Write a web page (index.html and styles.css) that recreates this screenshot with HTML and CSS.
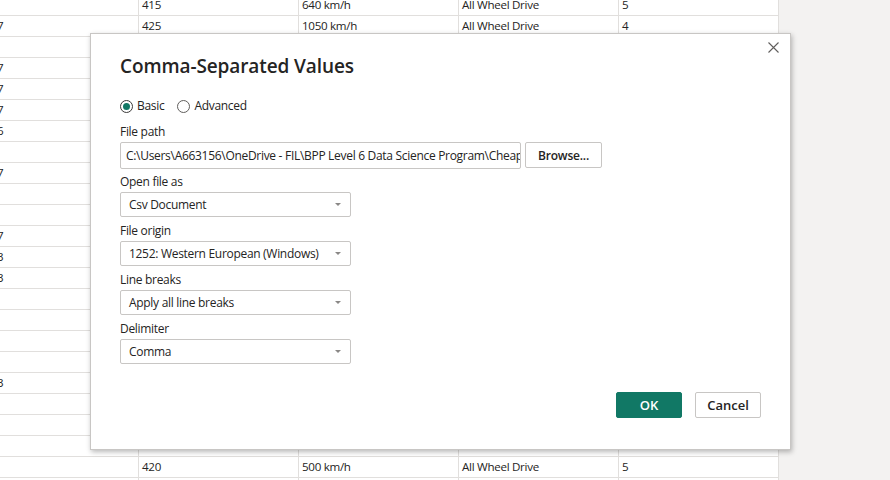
FILE: index.html
```html
<!DOCTYPE html>
<html lang="en">
<head>
<meta charset="utf-8">
<title>Comma-Separated Values</title>
<link rel="stylesheet" href="styles.css">
</head>
<body>
<div class="page">
  <div class="grid">
    <div class="row"><div class="c c1"></div><div class="c">415</div><div class="c">640 km/h</div><div class="c">All Wheel Drive</div><div class="c">5</div></div>
    <div class="row"><div class="c c1">7</div><div class="c">425</div><div class="c">1050 km/h</div><div class="c">All Wheel Drive</div><div class="c">4</div></div>
    <div class="row"><div class="c c1"></div><div class="c">405</div><div class="c">550 km/h</div><div class="c">All Wheel Drive</div><div class="c">5</div></div>
    <div class="row"><div class="c c1">7</div><div class="c">380</div><div class="c">520 km/h</div><div class="c">All Wheel Drive</div><div class="c">5</div></div>
    <div class="row"><div class="c c1">7</div><div class="c">410</div><div class="c">560 km/h</div><div class="c">All Wheel Drive</div><div class="c">5</div></div>
    <div class="row"><div class="c c1">7</div><div class="c">420</div><div class="c">610 km/h</div><div class="c">All Wheel Drive</div><div class="c">5</div></div>
    <div class="row"><div class="c c1">6</div><div class="c">395</div><div class="c">470 km/h</div><div class="c">All Wheel Drive</div><div class="c">5</div></div>
    <div class="row"><div class="c c1"></div><div class="c">440</div><div class="c">580 km/h</div><div class="c">All Wheel Drive</div><div class="c">5</div></div>
    <div class="row"><div class="c c1">7</div><div class="c">415</div><div class="c">600 km/h</div><div class="c">All Wheel Drive</div><div class="c">5</div></div>
    <div class="row"><div class="c c1"></div><div class="c">430</div><div class="c">540 km/h</div><div class="c">All Wheel Drive</div><div class="c">5</div></div>
    <div class="row"><div class="c c1"></div><div class="c">400</div><div class="c">490 km/h</div><div class="c">All Wheel Drive</div><div class="c">5</div></div>
    <div class="row"><div class="c c1">7</div><div class="c">450</div><div class="c">620 km/h</div><div class="c">All Wheel Drive</div><div class="c">5</div></div>
    <div class="row"><div class="c c1">3</div><div class="c">410</div><div class="c">530 km/h</div><div class="c">All Wheel Drive</div><div class="c">5</div></div>
    <div class="row"><div class="c c1">3</div><div class="c">420</div><div class="c">570 km/h</div><div class="c">All Wheel Drive</div><div class="c">5</div></div>
    <div class="row"><div class="c c1"></div><div class="c">405</div><div class="c">500 km/h</div><div class="c">All Wheel Drive</div><div class="c">5</div></div>
    <div class="row"><div class="c c1"></div><div class="c">390</div><div class="c">480 km/h</div><div class="c">All Wheel Drive</div><div class="c">5</div></div>
    <div class="row"><div class="c c1"></div><div class="c">415</div><div class="c">510 km/h</div><div class="c">All Wheel Drive</div><div class="c">5</div></div>
    <div class="row"><div class="c c1"></div><div class="c">425</div><div class="c">590 km/h</div><div class="c">All Wheel Drive</div><div class="c">5</div></div>
    <div class="row"><div class="c c1">3</div><div class="c">435</div><div class="c">560 km/h</div><div class="c">All Wheel Drive</div><div class="c">5</div></div>
    <div class="row"><div class="c c1"></div><div class="c">410</div><div class="c">520 km/h</div><div class="c">All Wheel Drive</div><div class="c">5</div></div>
    <div class="row"><div class="c c1"></div><div class="c">400</div><div class="c">540 km/h</div><div class="c">All Wheel Drive</div><div class="c">5</div></div>
    <div class="row"><div class="c c1"></div><div class="c">430</div><div class="c">500 km/h</div><div class="c">All Wheel Drive</div><div class="c">5</div></div>
    <div class="row"><div class="c c1"></div><div class="c">420</div><div class="c">500 km/h</div><div class="c">All Wheel Drive</div><div class="c">5</div></div>
    <div class="row"><div class="c c1"></div><div class="c"></div><div class="c"></div><div class="c"></div><div class="c"></div></div>
  </div>

  <div class="dialog" role="dialog" aria-labelledby="dlg-title">
    <button class="close" aria-label="Close">
      <svg width="11" height="11" viewBox="0 0 11 11"><path d="M0.5 0.5 L10.5 10.5 M10.5 0.5 L0.5 10.5" stroke="#605e5c" stroke-width="1.1" fill="none"/></svg>
    </button>
    <h1 class="title" id="dlg-title">Comma-Separated Values</h1>
    <div class="radios">
      <label class="radio"><span class="dot checked"></span>Basic</label>
      <label class="radio"><span class="dot"></span>Advanced</label>
    </div>
    <div class="label first">File path</div>
    <div class="pathrow">
      <div class="input">C:\Users\A663156\OneDrive - FIL\BPP Level 6 Data Science Program\Cheapest Electric Cars.csv</div>
      <button class="browse">Browse...</button>
    </div>
    <div class="label">Open file as</div>
    <div class="select"><span>Csv Document</span><span class="arrow"></span></div>
    <div class="label">File origin</div>
    <div class="select"><span>1252: Western European (Windows)</span><span class="arrow"></span></div>
    <div class="label">Line breaks</div>
    <div class="select"><span>Apply all line breaks</span><span class="arrow"></span></div>
    <div class="label">Delimiter</div>
    <div class="select"><span>Comma</span><span class="arrow"></span></div>
    <div class="actions">
      <button class="btn ok">OK</button>
      <button class="btn cancel">Cancel</button>
    </div>
  </div>
</div>
</body>
</html>
```

FILE: styles.css
```css
* { box-sizing: border-box; }
html, body { margin: 0; padding: 0; }
body {
  width: 890px;
  height: 480px;
  overflow: hidden;
  background: #f3f2f1;
  font-family: "Open Sans", "Noto Sans", sans-serif;
  color: #252423;
}
.page {
  position: relative;
  width: 890px;
  height: 480px;
  overflow: hidden;
}
.grid {
  width: 779px;
  margin-top: -5px;
  background: #fff;
}
.row {
  display: grid;
  grid-template-columns: 139px 160px 160px 160px 160px;
  height: 21px;
}
.c {
  border-right: 1px solid #e1dfdd;
  border-bottom: 1px solid #e1dfdd;
  font-size: 11.6px;
  line-height: 20px;
  padding-left: 3px;
  white-space: nowrap;
  overflow: hidden;
  color: #252423;
  letter-spacing: -0.3px;
}
.c1 {
  padding-left: 0;
  text-indent: -3px;
}

.dialog {
  position: absolute;
  left: 90px;
  top: 33px;
  width: 701px;
  height: 417px;
  background: #fff;
  border: 1px solid #c8c6c4;
  box-shadow: 1px 2px 5px rgba(0,0,0,0.28);
  padding: 18px 29px 31px 29px;
  display: flex;
  flex-direction: column;
  letter-spacing: -0.3px;
}
.close {
  position: absolute;
  right: 11px;
  top: 8px;
  width: 11px;
  height: 11px;
  padding: 0;
  border: 0;
  background: none;
  display: flex;
}
.title {
  margin: 0;
  font-size: 19px;
  font-weight: 600;
  line-height: 28px;
  color: #252423;
  letter-spacing: -0.1px;
}
.radios {
  display: flex;
  gap: 13px;
  margin-top: 18px;
  height: 16px;
  align-items: center;
}
.radio {
  display: flex;
  align-items: center;
  font-size: 12px;
  line-height: 16px;
  gap: 4px;
}
.dot {
  width: 13px;
  height: 13px;
  border-radius: 50%;
  border: 1px solid #605e5c;
  display: flex;
  align-items: center;
  justify-content: center;
}
.dot.checked { border-color: #3b3a39; }
.dot.checked::after {
  content: "";
  width: 7px;
  height: 7px;
  border-radius: 50%;
  background: #117865;
}
.label {
  font-size: 12px;
  line-height: 16px;
  margin-top: 6px;
  margin-bottom: 2px;
}
.label.first { margin-top: 10px; }
.pathrow {
  display: flex;
  gap: 4px;
  height: 27px;
  margin-bottom: -1px;
}
.input {
  width: 401px;
  height: 27px;
  border: 1px solid #c8c6c4;
  border-radius: 2px;
  font-size: 12px;
  line-height: 25px;
  padding-left: 5px;
  white-space: nowrap;
  overflow: hidden;
}
.browse {
  width: 77px;
  height: 26px;
  border: 1px solid #c8c6c4;
  border-radius: 2px;
  background: #fff;
  font-family: inherit;
  font-size: 12px;
  font-weight: 600;
  color: #252423;
  padding: 0;
  letter-spacing: -0.2px;
}
.select {
  width: 231px;
  height: 25px;
  border: 1px solid #c8c6c4;
  border-radius: 2px;
  display: flex;
  align-items: center;
  justify-content: space-between;
  padding: 0 9px 0 8px;
  font-size: 12px;
}
.arrow {
  width: 0;
  height: 0;
  border-left: 3px solid transparent;
  border-right: 3px solid transparent;
  border-top: 3px solid #8a8886;
}
.actions {
  margin-top: auto;
  display: flex;
  justify-content: flex-end;
  gap: 13px;
}
.btn {
  width: 66px;
  height: 26px;
  border-radius: 2px;
  font-family: inherit;
  font-size: 13px;
  font-weight: 600;
  padding: 0;
  letter-spacing: 0;
}
.ok {
  background: #117865;
  border: 1px solid #117865;
  color: #fff;
}
.cancel {
  background: #fff;
  border: 1px solid #c8c6c4;
  color: #252423;
}
```
